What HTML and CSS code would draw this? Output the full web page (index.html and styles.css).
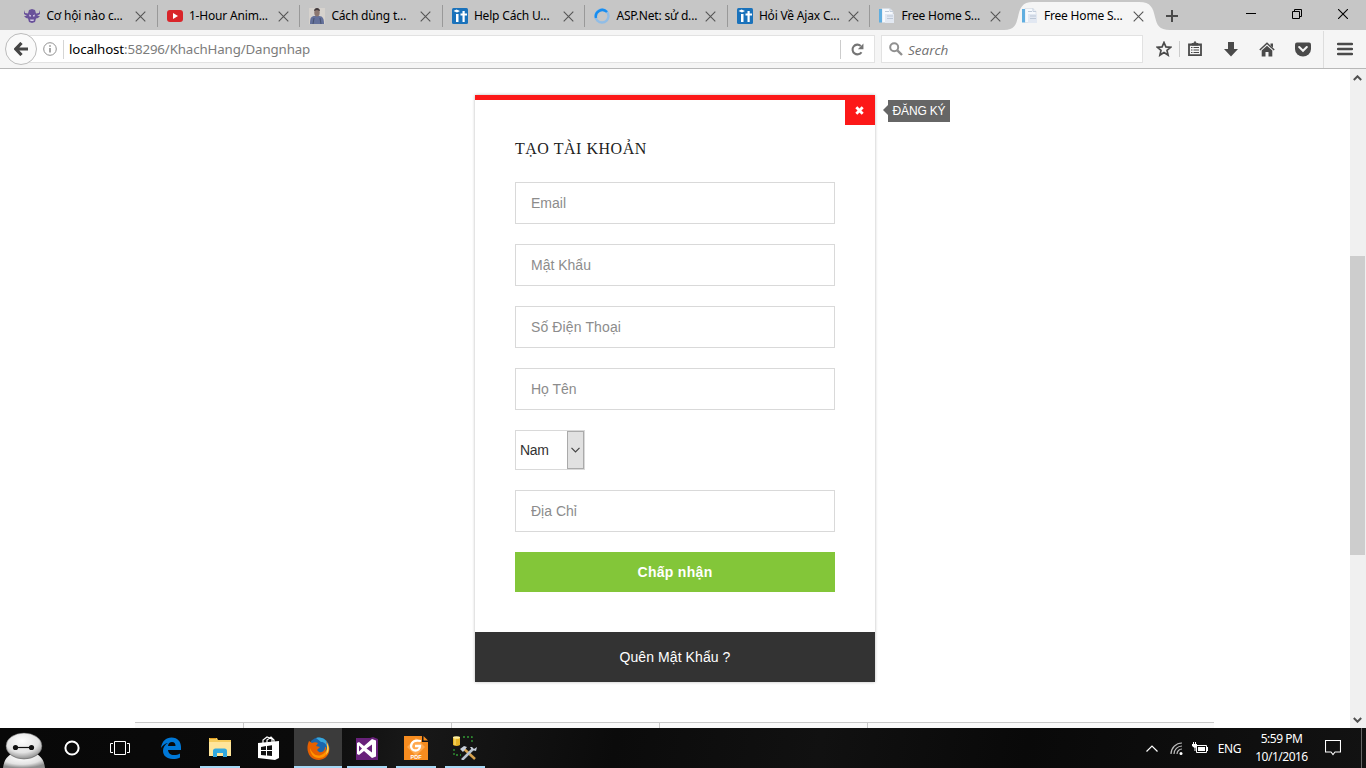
FILE: index.html
```html
<!DOCTYPE html>
<html lang="vi">
<head>
<meta charset="utf-8">
<title>Free Home S...</title>
<link rel="stylesheet" href="styles.css">
</head>
<body>
<svg width="0" height="0" class="defs">
  <defs>
    <symbol id="x" viewBox="0 0 11 11"><path d="M.7.7l9.6 9.6M10.3.7L.7 10.3" stroke="#555" stroke-width="1.1" fill="none"/></symbol>
    <symbol id="it" viewBox="0 0 16 16"><rect width="16" height="16" rx="1.5" fill="#1a72bb"/><path d="M1.500 3l3-1.600L8 3 5 4.500zM4 6h2.500v8H4zM10.500 3h2.200v2.500H15v2h-2.300v6.500h-2.200V7.500H8.500v-2h2z" fill="#fff"/></symbol>
    <symbol id="doc" viewBox="0 0 16 16"><path d="M3 .5h8l3 3v11H3z" fill="#f6f9fd" stroke="#d5dbe4" stroke-width=".7"/><path d="M0 1h3v13.5H0z" fill="#60aee0"/><path d="M6 6h9v9H6z" fill="#e2e8f2"/><path d="M8 8h6M8 10.5h6M6 3.5h4" stroke="#bdc8d7"/><path d="M11 .5v3h3" fill="none" stroke="#c2cddc"/></symbol>
  </defs>
</svg>
<div class="screen">
  <header class="tabs">
    <div class="tab"><svg class="fav" viewBox="0 0 16 16"><path d="M0 2l1 3 3 .5L5 2l3-1 3 1 1 3.500L15 5l1-3v4l-3 2h3l-2 2-2 .5-1 3.500-3 1-3-1-1-3.500L2 10 0 8h3L0 6z" fill="#69519a"/><path d="M5 6.500l2 .7v1.300H5.500zm6 0l-2 .7v1.300h1.500zM6 11.500h4l-.5 1.500h-3z" fill="#d5cce6"/></svg><span class="title">Cơ hội nào c...</span><svg class="close"><use href="#x"/></svg></div>
    <div class="tab"><svg class="fav" viewBox="0 0 16 16"><rect y="2" width="16" height="12" rx="3" fill="#d9252a"/><path d="M6 5l5 3-5 3z" fill="#fff"/></svg><span class="title">1-Hour Anim...</span><svg class="close"><use href="#x"/></svg></div>
    <div class="tab"><svg class="fav" viewBox="0 0 16 16"><path d="M0 0h16v16H0z" fill="#d6d2cd"/><path d="M1 16c0-6 1-8 5-8h4c4 0 5 3 5 8z" fill="#63709a"/><ellipse cx="8" cy="4.5" rx="2.7" ry="4" fill="#8b7770"/><path d="M5 3c0-4 6-4 6 0L8 2z" fill="#40393c"/><path d="M5 10l-1 6M11 10l1 6" stroke="#46516f"/></svg><span class="title">Cách dùng t...</span><svg class="close"><use href="#x"/></svg></div>
    <div class="tab"><svg class="fav"><use href="#it"/></svg><span class="title">Help Cách U...</span><svg class="close"><use href="#x"/></svg></div>
    <div class="tab"><svg class="fav" viewBox="0 0 16 16"><circle cx="8" cy="8" r="6.5" fill="none" stroke="#91bde6" stroke-width="2.4"/><path d="M2 10A6.5 6.5 0 0 1 13 4" fill="none" stroke="#178df0" stroke-width="2.5"/></svg><span class="title">ASP.Net: sử d...</span><svg class="close"><use href="#x"/></svg></div>
    <div class="tab"><svg class="fav"><use href="#it"/></svg><span class="title">Hỏi Về Ajax C...</span><svg class="close"><use href="#x"/></svg></div>
    <div class="tab last"><svg class="fav"><use href="#doc"/></svg><span class="title">Free Home S...</span><svg class="close"><use href="#x"/></svg></div>
    <div class="tab active"><svg class="tabshape" viewBox="0 0 166 28"><path d="M0 28C10 28 12 23 14 15 16 6 18 0 29 0H135C147 0 149 6 151 15 153 23 155 28 166 28Z" fill="#f5f5f5"/></svg><svg class="fav"><use href="#doc"/></svg><span class="title">Free Home S...</span><svg class="close"><use href="#x"/></svg></div>
    <svg class="plus" viewBox="0 0 12 12"><path d="M6 0v12M0 6h12" stroke="#4a4a4a" stroke-width="2"/></svg>
    <div class="window-buttons">
      <svg width="10" height="10" viewBox="0 0 10 10"><path d="M0 4.500h10" stroke="#000"/></svg>
      <svg width="10" height="10" viewBox="0 0 10 10"><path d="M.5 2.5h7v7h-7zM2.500 2V.5h7v7H8" fill="none" stroke="#000"/></svg>
      <svg width="10" height="10" viewBox="0 0 10 10"><path d="M0 0l10 10M10 0L0 10" stroke="#000" stroke-width="1.1"/></svg>
    </div>
  </header>
  <div class="toolbar">
    <div class="back"><svg width="14" height="14" viewBox="0 0 14 14"><path d="M7.500 1L1.800 7l5.700 6M2 7h12" stroke="#454545" stroke-width="3.200" fill="none"/></svg></div>
    <div class="url">
      <svg class="info" viewBox="0 0 14 14"><circle cx="7" cy="7" r="6.300" fill="none" stroke="#909090"/><path d="M7 6v4.500M7 3.300v1.500" stroke="#888" stroke-width="1.500"/></svg>
      <span class="address"><b>localhost</b>:58296/KhachHang/Dangnhap</span>
      <svg class="reload" viewBox="0 0 12 12"><path d="M9.700 8.500A4.500 4.500 0 1 1 9 2.700" fill="none" stroke="#747474" stroke-width="1.900"/><path d="M11.500.5v5.200H6.300z" fill="#747474"/></svg>
    </div>
    <div class="search"><svg width="14" height="14" viewBox="0 0 14 14"><circle cx="5.200" cy="5.200" r="4" fill="none" stroke="#909090" stroke-width="2"/><path d="M8.300 8.300L13 13" stroke="#909090" stroke-width="2.400"/></svg><i>Search</i></div>
    <div class="tools">
      <svg width="16" height="16" viewBox="0 0 16 16"><path d="M8 1.500l1.900 4.400 4.800.4-3.700 3.100 1.100 4.700L8 11.600l-4.100 2.500L5 9.400 1.300 6.300l4.800-.4z" fill="none" stroke="#4a4a4a" stroke-width="1.700"/></svg>
      <span class="rule"></span>
      <svg width="14" height="16" viewBox="0 0 14 16"><path d="M1 3.500h12v10.700H1z" fill="none" stroke="#4a4a4a" stroke-width="1.800"/><path d="M4 4V2.500h1.500L7 .5l1.500 2H10V4zM2 4h10" stroke="#4a4a4a" fill="#4a4a4a"/><path d="M3 6.500h1.500M3 9h1.500M3 11.500h1.500M5.500 6.500H11M5.500 9H11M5.500 11.500H11" stroke="#4a4a4a" stroke-width="1.200"/></svg>
      <svg class="down" width="14" height="15" viewBox="0 0 14 15"><path d="M4 0h6v7h4l-7 7.500L0 7h4z" fill="#4a4a4a"/></svg>
      <svg class="home" width="16" height="15" viewBox="0 0 16 15"><path d="M.8 8L8 1.200 15.200 8" fill="none" stroke="#4a4a4a" stroke-width="1.500"/><path d="M2.700 8.600L8 3.800l5.300 4.800V14.500H9.500V10h-3v4.500H2.700zM11.500 1.500H14v4l-2.500-2z" fill="#4a4a4a"/></svg>
      <svg class="pocket" width="16" height="15" viewBox="0 0 16 15"><path d="M2 .5h12q2 0 2 2v4.500a8 7.500 0 0 1-16 0V2.500q0-2 2-2z" fill="#4a4a4a"/><path d="M4.200 5l3.800 3.700L11.800 5" fill="none" stroke="#f5f5f5" stroke-width="2.100" stroke-linecap="round"/></svg>
    </div>
    <div class="menu"><svg width="16" height="14" viewBox="0 0 16 14"><path d="M1 2h14M1 7h14M1 12h14" stroke="#4a4a4a" stroke-width="2.500" stroke-linecap="round"/></svg></div>
  </div>
  <div class="viewport">
    <main class="page">
      <section class="card">
        <div class="toggle"><svg width="9" height="9" viewBox="0 0 9 9"><path d="M1.300 1.300l6.400 6.400M7.700 1.300L1.300 7.700" stroke="#fff" stroke-width="2.800"/></svg><span class="tip">ĐĂNG KÝ</span></div>
        <form class="form">
          <h2>TẠO TÀI KHOẢN</h2>
          <input type="text" placeholder="Email">
          <input type="text" placeholder="Mật Khẩu">
          <input type="text" class="phone" placeholder="Số Điện Thoại">
          <input type="text" placeholder="Họ Tên">
          <div class="select"><span>Nam</span><div class="arrow"><svg width="9" height="6" viewBox="0 0 9 6"><path d="M.5.8l4 4 4-4" stroke="#444" stroke-width="1.200" fill="none"/></svg></div></div>
          <input type="text" placeholder="Địa Chỉ">
          <button type="button">Chấp nhận</button>
        </form>
        <div class="forgot">Quên Mật Khẩu ?</div>
      </section>
      <div class="strip"><div></div><div></div><div></div><div></div><div></div></div>
    </main>
    <div class="scrollbar">
      <svg width="9" height="6" viewBox="0 0 9 6"><path d="M.8 5l3.700-3.700L8.200 5" stroke="#505050" stroke-width="2" fill="none"/></svg>
      <div class="thumb"></div>
      <svg class="dn" width="9" height="6" viewBox="0 0 9 6"><path d="M.8 1l3.700 3.700L8.200 1" stroke="#505050" stroke-width="2" fill="none"/></svg>
    </div>
  </div>
  <footer class="taskbar">
    <div class="start"><svg width="48" height="40" viewBox="0 0 48 40"><defs><radialGradient id="bay" cx=".45" cy=".3" r=".7"><stop offset="0" stop-color="#fff"/><stop offset=".65" stop-color="#e3e3e3"/><stop offset="1" stop-color="#8f8f8f"/></radialGradient></defs><path d="M3 40c1-8 4-12 10-15h22c6 3 9 7 10 15z" fill="url(#bay)"/><ellipse cx="24" cy="18" rx="18" ry="13" fill="url(#bay)" stroke="#555" stroke-width=".5"/><path d="M15 19.500h17" stroke="#111" stroke-width="1.200"/><circle cx="15.500" cy="19.500" r="2.600" fill="#111"/><circle cx="31.500" cy="19.500" r="2.600" fill="#111"/></svg></div>
    <div class="sys"><svg width="16" height="16" viewBox="0 0 16 16"><circle cx="8" cy="8" r="6.600" fill="none" stroke="#fff" stroke-width="2"/></svg></div>
    <div class="sys"><svg width="20" height="14" viewBox="0 0 20 14"><path d="M4.500.5h11v13h-11zM3 2.500H.5v9H3M17 2.500h2.500v9H17" fill="none" stroke="#fff"/></svg></div>
    <div class="apps">
      <div class="app"><svg width="22" height="22" viewBox="0 0 22 22"><path d="M1 11C2 4 6 .5 11.500.5 18 .5 21 5 21 10v3H8c.3 3 2.500 5 6 5 2.300 0 4.300-.6 6-1.600v4c-2 1-4.500 1.600-7.300 1.600C6.500 22 3 18.500 3 13.800c0-3.500 2-6.300 5-7.800C5 6.500 2.600 8.300 1 11zm7-2h7.500C15.500 6.500 14.300 5 12 5S8.400 6.500 8 9z" fill="#0078d7"/></svg></div>
      <div class="app run"><svg width="22" height="20" viewBox="0 0 22 20"><path d="M0 0h8l1 2h13v16H0z" fill="#f5cb5c"/><path d="M0 4h22v14H0z" fill="#ffe59a"/><path d="M1 0h6v1H1z" fill="#e29d20"/><path d="M4 19v-6q0-2.500 2.500-2.500h9Q18 10.500 18 13v6h-4v-4H8v4z" fill="#32a9df"/></svg></div>
      <div class="app"><svg width="22" height="24" viewBox="0 0 22 24"><path d="M5 7V4l4-3 5 2v4M9 7V4l4-3 3 3v3" fill="none" stroke="#fff" stroke-width="1.200"/><path d="M0 7l21-2v17l-4 2-17-2z" fill="#fff"/><path d="M3 11l5-1v4H3zm6-1l5-.7V14H9zM3 15h5v4.500L3 19zm6 0h5v5l-5-.5z" fill="#111"/></svg></div>
      <div class="app run selected"><svg width="23" height="23" viewBox="0 0 23 23"><circle cx="12" cy="11" r="10.500" fill="#1b67ad"/><path d="M9 1c7-2 13 3 12 11-2-5-3-7-7-7z" fill="#38a7dc"/><path d="M2 4l3 2c2-1 4-1 6 0L9 9l4 1-3 3 2 2c4 1 6-2 6-5 2 0 1 3 0 5 3-2 2-8 1-11 6 7 4 18-7 19C2 23-2 13 2 4z" fill="#e66000"/><path d="M3 11c2 5 6 9 11 7 3-1 5-4 6-6 1 6-3 9-8 9-6 0-9-5-9-10z" fill="#ff9500"/><path d="M20 6c3 5 2 9-1 12l1-5z" fill="#ffd24a"/></svg></div>
      <div class="app run"><svg width="22" height="23" viewBox="0 0 22 23"><path d="M0 1h14l3-1 5 2v21H0z" fill="#68217a"/><path fill-rule="evenodd" d="M1 6l2-1 5 4 8-7 4 1.600v15.800L16 21l-8-7-5 4-2-1zM3 8.500v6l3-3zM16 7.500l-5.500 4 5.500 4z" fill="#fff"/></svg></div>
      <div class="app run"><svg width="24" height="24" viewBox="0 0 24 24"><path d="M0 0h18v6h6v18H0z" fill="#f78c1f"/><path d="M19.500 0L24 4.500h-4.500z" fill="#f78c1f"/><path d="M12 2l9 9-9 9-9-9z" fill="#ffa94f"/><path d="M17 5q-9-2-10 5c0 6 9 6 9 0h-5" fill="none" stroke="#fff" stroke-width="2.300"/><text x="12" y="22.700" text-anchor="middle" font-family="Liberation Sans" font-size="5.500" font-weight="bold" fill="#fff">PDF</text></svg></div>
      <div class="app run"><svg width="24" height="24" viewBox="0 0 24 24"><path d="M0 1h7v8q-3.500 2-7 0z" fill="#e5b428"/><ellipse cx="3.500" cy="1.500" rx="3.500" ry="1.300" fill="#fff0a0"/><path d="M2 3v6" stroke="#ffe580"/><path d="M10 1h9v7M1 13v6h7" fill="none" stroke="#329b35" stroke-width="1.300" stroke-dasharray="2 2"/><path d="M10 12l12 11" stroke="#d7a34f" stroke-width="2.500"/><path d="M20 13L9 24" stroke="#b7c1ce" stroke-width="2.600"/><path d="M7 13l4-3 3 1-4 5zM17 11l2 3 4 1 1-4-3 2-2-2z" fill="#c7cfda"/></svg></div>
    </div>
    <div class="tray">
      <svg width="12" height="7" viewBox="0 0 12 7"><path d="M.5 6.500L6 1l5.500 5.500" stroke="#fff" stroke-width="1.200" fill="none"/></svg>
      <svg width="13" height="13" viewBox="0 0 13 13"><path d="M1 12A11 11 0 0 1 12 1M4 12a8 8 0 0 1 8-8M7 12a5 5 0 0 1 5-5" fill="none" stroke="#bbb" stroke-width="1.200"/><circle cx="11" cy="11.500" r="1.500" fill="#fff"/></svg>
      <svg class="battery" width="16" height="12" viewBox="0 0 16 12"><path d="M4.500 3.500h10v7h-10z" stroke="#fff" fill="none"/><path d="M6 5h7v4H6zM15 5h1v4h-1zM0 2h5v2L3.500 6v3h-1V6L0 4zM1 0h1v2H1zM3 0h1v2H3z" fill="#fff"/></svg>
      <span class="lang">ENG</span>
      <div class="clock"><span>5:59 PM</span><span>10/1/2016</span></div>
      <svg width="16" height="16" viewBox="0 0 16 16"><path d="M.5.500h15v11.500H10L8 14.500 6 12H.5z" fill="none" stroke="#fff" stroke-width="1.100"/></svg>
    </div>
  </footer>
</div>
</body>
</html>
```
FILE: styles.css
```css
* { box-sizing: border-box; }
body { margin: 0; overflow: hidden; background: #fff; font-family: "Liberation Sans", Arial, sans-serif; }
svg { display: block; flex: none; }
.defs { position: absolute; }
.screen { width: 1366px; height: 768px; display: flex; flex-direction: column; }

.tabs { height: 30px; flex: none; display: flex; background: #c6c6c6; padding-left: 15.4px; font: 12px/30px "Noto Sans", sans-serif; color: #000; }
.tab { width: 142.5px; flex: none; display: flex; align-items: center; padding: 2px 0 0 9px; position: relative; }
.tab:not(.last):not(.active)::after { content: ""; position: absolute; right: 0; top: 5px; width: 1px; height: 22px; background: #999; }
.fav { width: 16px; height: 16px; margin-right: 6px; position: relative; }
.title { width: 89px; letter-spacing: -.18px; white-space: nowrap; position: relative; }
.close { width: 11px; height: 11px; position: relative; }
.tabshape { position: absolute; left: -9px; top: 2px; width: 166px; height: 28px; }
.plus { width: 12px; height: 12px; margin: 10px 0 0 11px; }
.window-buttons { margin: 9px 18px 0 auto; display: flex; gap: 36px; }

.toolbar { height: 39px; flex: none; display: flex; align-items: center; background: #f5f5f5; border-bottom: 1px solid #b8b8b8; padding-left: 5px; }
.back { width: 32px; height: 32px; border: 1px solid #bbb; border-radius: 50%; background: #fafafa; display: flex; align-items: center; justify-content: center; z-index: 1; }
.url { width: 855px; height: 28px; margin-left: -17px; background: #fff; border: 1px solid #e2e2e2; display: flex; align-items: center; padding-left: 22px; }
.info { width: 14px; height: 14px; }
.address { flex: 1; margin-left: 6px; padding-left: 5px; border-left: 1px solid #d5d5d5; font: 13.3px/19px "Noto Sans", sans-serif; letter-spacing: -.13px; color: #7c7c7c; }
.address b { color: #000; font-weight: normal; }
.reload { width: 34px; height: 19px; padding: 3px 10px; border-left: 1px solid #ccc; }
.search { width: 262px; height: 28px; margin-left: 6px; background: #fff; border: 1px solid #e2e2e2; display: flex; align-items: center; gap: 5px; padding: 0 0 1px 7px; font: 13.5px "Open Sans", sans-serif; color: #707070; }
.search i { padding-top: 2px; }
.tools { display: flex; align-items: center; margin-left: 13px; }
.rule { width: 1px; height: 16px; background: #ccc; margin: 0 8px 0 7px; }
.down { margin-left: 22px; }
.home { margin-left: 21px; }
.pocket { margin-left: 20px; }
.menu { height: 37px; margin-left: 12px; padding-left: 13px; border-left: 1px solid #ddd; display: flex; align-items: center; }

.viewport { height: 659px; flex: none; display: flex; background: #fff; }
.page { width: 1350px; display: flex; flex-direction: column; padding-top: 26px; }
.card { width: 400px; height: 587px; margin-left: 475px; position: relative; border-top: 5px solid #fc1818; box-shadow: 0 0 3px rgba(0,0,0,.28); display: flex; flex-direction: column; flex: none; }
.toggle { position: absolute; top: -5px; right: 0; width: 30px; height: 30px; background: #fc1818; display: flex; align-items: center; justify-content: center; padding-right: 1px; }
.tip { position: absolute; left: 43px; top: 5px; width: 62px; height: 22px; background: #666; color: #fff; font: 12px/22px "Liberation Sans", sans-serif; letter-spacing: -.15px; text-align: center; white-space: nowrap; }
.tip::before { content: ""; position: absolute; left: -5px; top: 5px; border: 5px solid transparent; border-left: 0; border-right-color: #666; }
.form { display: flex; flex-direction: column; gap: 20px; padding: 40px; height: 532px; }
h2 { margin: 0 0 4px; height: 18px; font: 16px/18px "Liberation Serif", serif; letter-spacing: .52px; color: #222; }
input { width: 320px; height: 42px; flex: none; padding: 0 15px; border: 1px solid #d9d9d9; background: #fff; font: 14px "Liberation Sans", sans-serif; outline: 0; }
input::placeholder { color: #8c8c8c; opacity: 1; }
.phone { letter-spacing: .12px; }
.select { width: 70px; height: 40px; flex: none; border: 1px solid #d9d9d9; display: flex; justify-content: space-between; align-items: stretch; padding-left: 4px; font: 14px/38px "Liberation Sans", sans-serif; letter-spacing: -.3px; color: #333; }
.arrow { width: 17px; border: 1px solid #aaa; background: #e1e1e1; display: flex; align-items: center; justify-content: center; }
button { width: 320px; height: 40px; flex: none; padding: 0; border: 0; background: #83c639; color: #fff; font: bold 14px "Liberation Sans", sans-serif; letter-spacing: .3px; }
.forgot { height: 50px; background: #333; color: #fff; text-align: center; font-size: 14px; line-height: 50px; letter-spacing: .08px; }
.strip { margin: 40px 0 0 135px; width: 1079px; height: 6px; flex: none; display: grid; grid-template-columns: 109px 208px 208px 208px 1fr; border-top: 1px solid #c8c8c8; background: #fafafa; }
.strip div:not(:last-child) { border-right: 1px solid #c8c8c8; }
.scrollbar { width: 16px; background: #f0f0f0; display: flex; flex-direction: column; align-items: center; padding: 6px 1px 5px 0; }
.thumb { width: 15px; height: 299px; margin-top: 175px; background: #cdcdcd; }
.dn { margin-top: auto; }

.taskbar { height: 40px; flex: none; display: flex; background: linear-gradient(100deg, #080808, #0a0a0a 22%, #181818 30%, #0b0b0b 45%, #111 60%, #090909 75%, #121212); color: #fff; }
.start, .sys { width: 48px; display: flex; align-items: center; justify-content: center; }
.apps { display: flex; gap: 1px; margin-left: 3px; }
.app { width: 48px; display: flex; align-items: center; justify-content: center; position: relative; }
.run::after { content: ""; position: absolute; left: 4px; right: 4px; bottom: 0; height: 2px; background: #a6d8f5; }
.selected { background: #3b3b3b; }
.selected::after { left: 0; right: 0; }
.tray { margin-left: auto; padding-right: 25px; display: flex; align-items: center; gap: 12px; font: 12px "Noto Sans", sans-serif; letter-spacing: -.4px; position: relative; }
.tray::after { content: ""; position: absolute; right: 4px; top: 0; bottom: 0; width: 1px; background: #666; }
.battery { margin-left: -3px; }
.clock { width: 57px; margin-right: 3px; display: flex; flex-direction: column; align-items: center; line-height: 18px; white-space: nowrap; letter-spacing: -.5px; }
.lang { margin-left: -2px; }
```
